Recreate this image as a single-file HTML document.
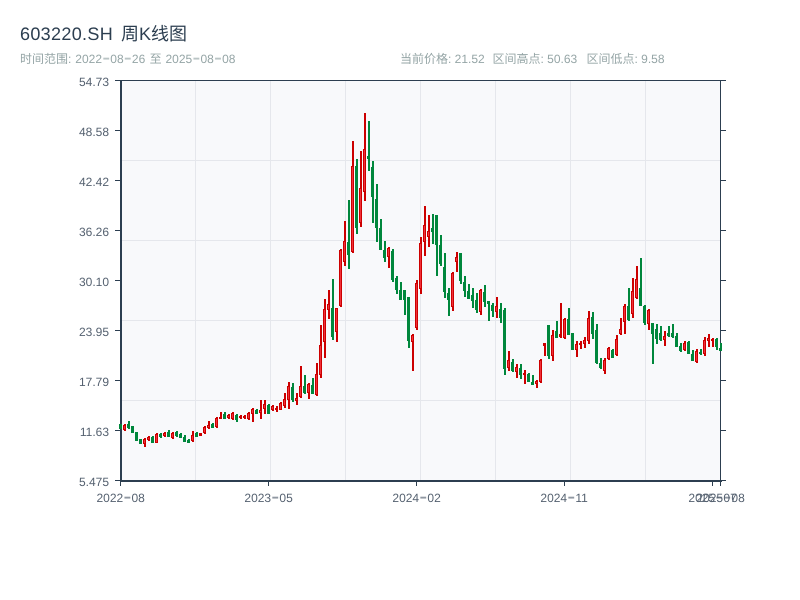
<!DOCTYPE html>
<html><head><meta charset="utf-8"><title>603220.SH 周K线图</title>
<style>
html,body{margin:0;padding:0;background:#fff;width:800px;height:600px;overflow:hidden}
svg{display:block;font-family:"Liberation Sans","Noto Sans CJK SC",sans-serif;text-rendering:geometricPrecision}
.h{font-size:24px;fill-opacity:.65}
</style></head><body>
<svg width="800" height="600" viewBox="0 0 800 600" xmlns="http://www.w3.org/2000/svg">
<rect width="800" height="600" fill="#fff"/>
<text x="20" y="40" font-size="18" fill="#2c3e50"><tspan letter-spacing="0.33">603220.SH</tspan><tspan x="121">周K线图</tspan></text>
<text y="63" font-size="12" fill="#95a5a6"><tspan x="20">时间范围: </tspan><tspan x="75.3">2022</tspan><tspan class="h" x="102.2" y="65">-</tspan><tspan x="110.3" y="63">08</tspan><tspan class="h" x="123.8" y="65">-</tspan><tspan x="131.9" y="63">26 </tspan><tspan x="149.6">至 </tspan><tspan x="165.5">2025</tspan><tspan class="h" x="192.4" y="65">-</tspan><tspan x="200.5" y="63">08</tspan><tspan class="h" x="214" y="65">-</tspan><tspan x="222.1" y="63">08</tspan></text>
<g font-size="12" fill="#95a5a6"><text x="400" y="63">当前价格: 21.52</text><text x="492.5" y="63">区间高点: 50.63</text><text x="586.5" y="63">区间低点: 9.58</text></g>
<rect x="121" y="81" width="600" height="400" fill="#f8f9fb"/>
<g stroke="#e5e7ec" stroke-width="1" fill="none" shape-rendering="crispEdges">
<path d="M195.5 81V481M270.5 81V481M345.5 81V481M420.5 81V481M495.5 81V481M570.5 81V481M645.5 81V481"/>
<path d="M121 160.5H721M121 240.5H721M121 320.5H721M121 400.5H721"/>
</g>
<g fill="none" stroke="#2c3e50" shape-rendering="crispEdges">
<path stroke-width="2" d="M121 80V482M120 481H722"/>
<path stroke-width="1" d="M120 80.5H726M720.5 80V481"/>
<path stroke-width="1" d="M115 80.5H121M115 130.5H121M115 180.5H121M115 230.5H121M115 280.5H121M115 330.5H121M115 380.5H121M115 430.5H121M115 480.5H121"/>
<path stroke-width="1" d="M721 130.5H726M721 180.5H726M721 230.5H726M721 280.5H726M721 330.5H726M721 380.5H726M721 430.5H726M721 480.5H726"/>
<path stroke-width="1" d="M120.5 482V486M268.5 482V486M416.5 482V486M564.5 482V486M712.5 482V486M720.5 482V486"/>
</g>
<g font-size="12" fill="#556170" text-anchor="end">
<text x="109" y="86">54.73</text><text x="109" y="136">48.58</text><text x="109" y="186">42.42</text><text x="109" y="236">36.26</text><text x="109" y="286">30.10</text><text x="109" y="336">23.95</text><text x="109" y="386">17.79</text><text x="109" y="436">11.63</text><text x="109" y="486">5.475</text>
</g>
<g font-size="12" fill="#556170">
<text y="502"><tspan x="96.5">2022</tspan><tspan class="h" x="123.4" y="504">-</tspan><tspan x="131.5" y="502">08</tspan></text>
<text y="502"><tspan x="244.4">2023</tspan><tspan class="h" x="271.3" y="504">-</tspan><tspan x="279.4" y="502">05</tspan></text>
<text y="502"><tspan x="392.4">2024</tspan><tspan class="h" x="419.3" y="504">-</tspan><tspan x="427.4" y="502">02</tspan></text>
<text y="502"><tspan x="540.4">2024</tspan><tspan class="h" x="567.3" y="504">-</tspan><tspan x="575.4" y="502">11</tspan></text>
<text y="502"><tspan x="688.4">2025</tspan><tspan class="h" x="715.3" y="504">-</tspan><tspan x="723.4" y="502">07</tspan></text>
<text y="502"><tspan x="696.4">2025</tspan><tspan class="h" x="723.3" y="504">-</tspan><tspan x="731.4" y="502">08</tspan></text>
</g>
<g fill="none" shape-rendering="crispEdges">
<path stroke="#00873c" stroke-width="2" d="M121 424V429M129 421V429M133 426V433M137 432V441M141 439V444M153 436V443M161 433V438M169 430V437M177 431V437M181 433V438M185 435V442M189 439V443M197 432V437M213 423V428M225 412V419M237 414V422M257 409V414M269 404V414M293 383V402M305 375V394M313 378V394M333 279V340M349 200V269M357 159V234M369 121V171M373 161V223M377 184V242M381 219V250M385 241V262M393 249V282M397 276V294M401 282V300M405 290V315M409 297V348M433 214V244M437 215V276M441 235V266M445 253V298M449 288V316M461 253V284M465 276V297M469 284V299M473 288V308M477 293V313M485 285V307M489 301V321M493 303V317M501 303V323M505 308V375M513 359V372M521 364V379M529 373V382M533 375V385M549 325V359M557 321V338M569 308V335M573 333V350M593 312V339M597 324V364M601 358V369M613 349V358M629 288V321M641 258V306M645 305V325M653 323V364M657 324V344M661 326V341M669 326V337M673 324V338M677 333V347M681 343V352M689 341V354M693 350V361M701 349V355M717 338V350M721 343V351"/>
<path stroke="#00873c" stroke-width="1" d="M119.5 424V429M127.5 424V428M131.5 426V433M135.5 432V441M139.5 439V444M151.5 437V443M159.5 434V437M167.5 432V437M175.5 432V436M179.5 434V438M183.5 437V442M187.5 440V443M195.5 433V437M211.5 424V428M223.5 414V419M235.5 415V420M255.5 410V414M267.5 405V414M291.5 387V400M303.5 386V393M311.5 385V394M331.5 308V337M347.5 242V255M355.5 166V228M367.5 156V159M371.5 167V197M375.5 199V228M379.5 228V250M383.5 250V258M391.5 251V280M395.5 278V290M399.5 290V300M403.5 290V300M407.5 297V341M431.5 228V232M435.5 215V245M439.5 245V264M443.5 267V292M447.5 293V300M459.5 253V281M463.5 282V291M467.5 291V299M471.5 295V301M475.5 300V310M483.5 292V302M487.5 301V304M491.5 305V311M499.5 309V318M503.5 310V369M511.5 362V371M519.5 368V375M527.5 374V382M531.5 382V385M547.5 325V356M555.5 331V338M567.5 319V335M571.5 333V350M591.5 317V334M595.5 330V363M599.5 363V368M611.5 350V358M627.5 306V320M639.5 288V306M643.5 306V323M651.5 323V334M655.5 329V339M659.5 333V340M667.5 333V336M671.5 333V337M675.5 336V347M679.5 346V351M687.5 342V354M691.5 354V361M699.5 352V354M715.5 339V347M719.5 348V351"/>
<path stroke="#cc0000" stroke-width="2" d="M125 424V431M145 438V447M149 436V441M157 433V443M165 432V437M173 432V439M193 431V442M201 433V436M205 426V434M209 421V429M217 417V428M221 412V419M229 414V419M233 412V420M241 415V419M245 415V419M249 412V420M253 408V422M261 400V419M265 400V414M273 405V411M277 406V412M281 402V410M285 393V408M289 382V409M297 393V405M301 366V398M309 383V399M317 363V396M321 325V378M325 299V358M329 290V319M337 308V342M341 249V307M345 221V266M353 141V253M361 151V227M365 113V201M389 247V268M413 334V371M417 280V330M421 237V294M425 206V256M429 215V247M453 272V311M457 252V272M481 289V315M497 297V318M509 351V371M517 364V378M525 370V384M537 380V388M541 359V383M545 343V356M553 330V361M561 303V338M565 318V339M577 341V357M581 341V349M585 337V348M589 311V344M605 358V374M609 347V360M617 335V356M621 318V335M625 304V334M633 278V318M637 266V299M649 309V330M665 331V346M685 341V351M697 349V363M705 337V356M709 334V347M713 338V347"/>
<path stroke="#cc0000" stroke-width="1" d="M123.5 425V430M143.5 439V444M147.5 437V440M155.5 434V443M163.5 433V436M171.5 433V438M191.5 435V441M199.5 433V436M203.5 427V433M207.5 425V428M215.5 418V427M219.5 417V419M227.5 415V418M231.5 413V419M239.5 416V418M243.5 416V418M247.5 413V419M251.5 409V414M259.5 410V413M263.5 404V409M271.5 406V410M275.5 408V410M279.5 403V410M283.5 399V406M287.5 386V400M295.5 398V401M299.5 386V397M307.5 384V393M315.5 374V395M319.5 345V375M323.5 309V342M327.5 304V310M335.5 308V332M339.5 250V306M343.5 241V262M351.5 166V252M359.5 188V223M363.5 149V192M387.5 248V257M411.5 335V342M415.5 283V328M419.5 243V289M423.5 225V242M427.5 231V237M451.5 273V307M455.5 257V262M479.5 290V312M495.5 306V312M507.5 360V368M515.5 367V372M523.5 373V375M535.5 381V384M539.5 360V382M543.5 343V346M551.5 335V356M559.5 334V337M563.5 319V338M575.5 344V350M579.5 343V345M583.5 340V344M587.5 318V341M603.5 360V371M607.5 348V359M615.5 339V355M619.5 329V334M623.5 306V322M631.5 291V314M635.5 279V298M647.5 310V324M663.5 336V340M683.5 343V350M695.5 351V362M703.5 340V354M707.5 338V341M711.5 339V341"/>
<path stroke="#f0303a" stroke-width="1" d="M124.5 426V429M144.5 440V443M148.5 438V439M156.5 435V442M164.5 434V435M172.5 434V437M192.5 436V440M204.5 428V432M208.5 426V427M216.5 419V426M228.5 416V417M232.5 414V418M248.5 414V418M252.5 410V413M260.5 411V412M264.5 405V408M272.5 407V409M280.5 404V409M284.5 400V405M288.5 387V399M296.5 399V400M300.5 387V396M308.5 385V392M316.5 375V394M320.5 346V374M324.5 310V341M328.5 305V309M336.5 309V331M340.5 251V305M344.5 242V261M352.5 167V251M360.5 189V222M364.5 150V191M388.5 249V256M412.5 336V341M416.5 284V327M420.5 244V288M424.5 226V241M428.5 232V236M452.5 274V306M456.5 258V261M480.5 291V311M496.5 307V311M508.5 361V367M516.5 368V371M536.5 382V383M540.5 361V381M552.5 336V355M564.5 320V337M576.5 345V349M584.5 341V343M588.5 319V340M604.5 361V370M608.5 349V358M616.5 340V354M620.5 330V333M624.5 307V321M632.5 292V313M636.5 280V297M648.5 311V323M664.5 337V339M684.5 344V349M696.5 352V361M704.5 341V353M708.5 339V340"/>
</g>
</svg>
</body></html>
